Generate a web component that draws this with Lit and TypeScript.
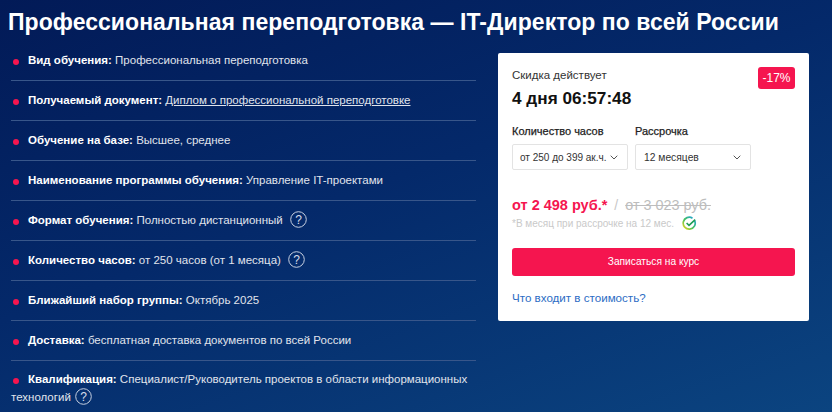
import { LitElement, html, css } from "lit";
import { customElement } from "lit/decorators.js";

const Q = html`<svg class="q" width="17" height="17" viewBox="0 0 17 17"><circle cx="8.5" cy="8.5" r="7.8" fill="none" stroke="#c6cfe0" stroke-width="1"/><text x="8.5" y="13" text-anchor="middle" font-size="12" font-family="Liberation Sans" fill="#d8deea">?</text></svg>`;
const CH = html`<svg class="ch" width="8" height="5" viewBox="0 0 8 5"><path d="M.7.7 4 4l3.3-3.3" fill="none" stroke="#555" stroke-width="1"/></svg>`;

@customElement("app-root")
export class AppRoot extends LitElement {
  static styles = css`
    :host { display: block; width: 832px; height: 412px; overflow: hidden; font-family: "Liberation Sans", Arial, sans-serif;
      background: linear-gradient(160deg, #021a57 0%, #04296a 45%, #0b4480 100%); color: #fff; }
    h1 { margin: 0; padding: 9px 0 0 8px; font-size: 23px; line-height: 26px; font-weight: 700; white-space: nowrap; letter-spacing: .05px; }
    .main { display: flex; align-items: flex-start; padding: 18px 0 0 11px; }
    ul { list-style: none; margin: -12px 0 0; padding: 0; width: 465px; }
    li { height: 27px; border-bottom: 1px solid #38568a; padding-top: 12px; font-size: 11.5px; line-height: 14px; color: #e0e4ec; white-space: nowrap; }
    li:last-child { border: 0; padding-top: 9px; line-height: 18px; height: auto; }
    li:last-child .q { margin-left: 1px; }
    .dot { display: inline-block; width: 6px; height: 6px; border-radius: 50%; background: #f5154f; margin: 0 9px 0 2px; vertical-align: -0.5px; }
    b { color: #fff; }
    a.doc { color: #e0e4ec; text-decoration: underline; }
    .q { vertical-align: middle; margin-left: 4px; margin-top: -3px; }
    .card { margin-left: 22px; width: 311px; height: 268px; box-sizing: border-box; background: #fff; border-radius: 2px; color: #222; padding: 15px 14px 0; position: relative; }
    .sale { font-size: 11.5px; line-height: 14px; color: #333; }
    .timer { font-size: 17.2px; line-height: 20px; font-weight: 700; color: #111; margin-top: 6px; }
    .badge { position: absolute; top: 14px; right: 14px; width: 37px; height: 22px; border-radius: 3px; background: #f5154f; color: #fff; font-size: 12px; line-height: 22px; text-align: center; }
    .sels { display: flex; gap: 7px; margin-top: 17px; }
    .lab { font-size: 11px; line-height: 13px; font-weight: 400; color: #222; -webkit-text-stroke: .25px #222; margin-bottom: 6px; }
    .sel { height: 26px; border: 1px solid #e3e3e3; border-radius: 2px; display: flex; align-items: center; justify-content: space-between; padding: 0 9px 0 7px; box-sizing: border-box; font-size: 10px; color: #333; }
    .s1, .s2 { width: 116px; }
    .s2 { padding-left: 8px; font-size: 10.3px; }
    .price { margin-top: 26px; display: flex; align-items: baseline; font-size: 14.5px; line-height: 18px; }
    .new { color: #f5154f; font-weight: 700; }
    .sl { color: #c8c8c8; margin: 0 7px; font-size: 14px; }
    .old { color: #bdbdbd; text-decoration: line-through; font-size: 14.4px; }
    .note { display: flex; align-items: center; font-size: 10px; line-height: 14px; color: #c9c9c9; margin-top: 2px; }
    .note svg { margin-left: 8px; }
    .btn { margin-top: 17px; height: 28px; background: #f5154f; border-radius: 3px; color: #fff; font-size: 10.2px; line-height: 28px; text-align: center; }
    .inc { margin-top: 15px; font-size: 11.6px; line-height: 14px; color: #2c6cc4; }
  `;
  render() {
    return html`
      <h1>Профессиональная переподготовка — IT-Директор по всей России</h1>
      <div class="main">
        <ul>
          <li><i class="dot"></i><b>Вид обучения:</b> Профессиональная переподготовка</li>
          <li><i class="dot"></i><b>Получаемый документ:</b> <a class="doc">Диплом о профессиональной переподготовке</a></li>
          <li><i class="dot"></i><b>Обучение на базе:</b> Высшее, среднее</li>
          <li><i class="dot"></i><b>Наименование программы обучения:</b> Управление IT-проектами</li>
          <li><i class="dot"></i><b>Формат обучения:</b> Полностью дистанционный ${Q}</li>
          <li><i class="dot"></i><b>Количество часов:</b> от 250 часов (от 1 месяца) ${Q}</li>
          <li><i class="dot"></i><b>Ближайший набор группы:</b> Октябрь 2025</li>
          <li><i class="dot"></i><b>Доставка:</b> бесплатная доставка документов по всей России</li>
          <li><i class="dot"></i><b>Квалификация:</b> Специалист/Руководитель проектов в области информационных<br />технологий ${Q}</li>
        </ul>
        <div class="card">
          <div class="sale">Скидка действует</div>
          <div class="timer">4 дня 06:57:48</div>
          <div class="badge">-17%</div>
          <div class="sels">
            <div><div class="lab">Количество часов</div><div class="sel s1"><span>от 250 до 399 ак.ч.</span>${CH}</div></div>
            <div><div class="lab">Рассрочка</div><div class="sel s2"><span>12 месяцев</span>${CH}</div></div>
          </div>
          <div class="price"><span class="new">от 2 498 руб.*</span><span class="sl">/</span><span class="old">от 3 023 руб.</span></div>
          <div class="note">*В месяц при рассрочке на 12 мес.
            <svg width="15" height="15" viewBox="0 0 15 15"><defs><linearGradient id="g" x1="0" y1="1" x2="1" y2="0"><stop offset="0" stop-color="#f6d81e"/><stop offset=".45" stop-color="#45c25c"/><stop offset="1" stop-color="#1c9fe2"/></linearGradient></defs><path d="M12.6 4.6A6 6 0 1 1 10.5 2.2" fill="none" stroke="url(#g)" stroke-width="1.7"/><path d="M4.6 7 7 9.3 13.2 3.6" fill="none" stroke="#1f9d55" stroke-width="1.6"/></svg>
          </div>
          <div class="btn">Записаться на курс</div>
          <div class="inc">Что входит в стоимость?</div>
        </div>
      </div>`;
  }
}
